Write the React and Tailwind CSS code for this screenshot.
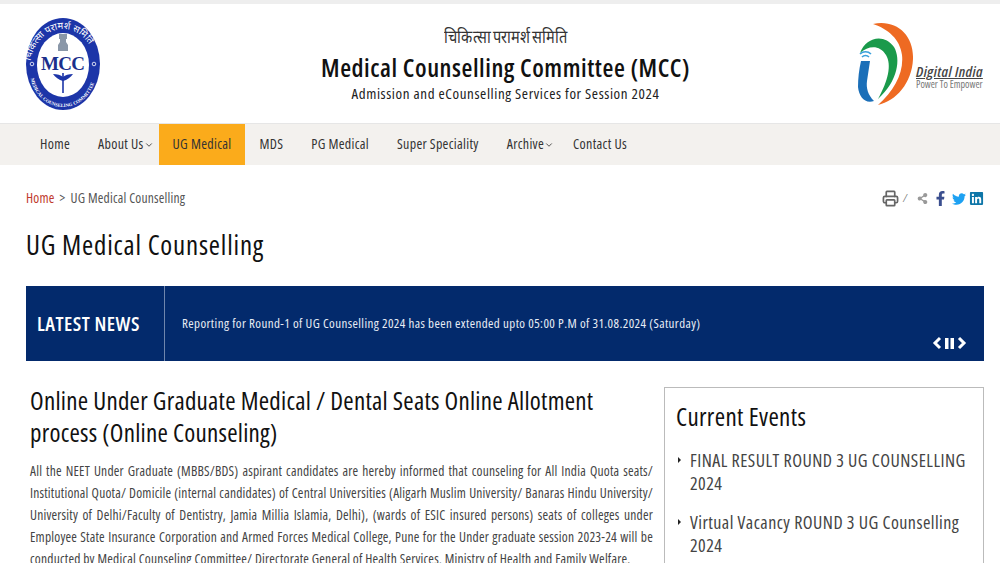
import React from 'react';
import { ChevronDown, Printer } from 'lucide-react';
import { FaFacebookF, FaTwitter, FaLinkedin, FaShareAlt } from 'react-icons/fa';

const Mcc = () => (
  <svg width="76" height="94" viewBox="0 0 76 94">
    <defs>
      <path id="topArc" d="M5 52 A33 40 0 0 1 71 52" />
      <path id="botArc" d="M5 54 A33 36 0 0 0 71 54" />
    </defs>
    <ellipse cx="38" cy="47" rx="37" ry="46" fill="#1c35a8" />
    <ellipse cx="38" cy="48" rx="26" ry="32" fill="#fff" />
    <circle cx="7" cy="47" r="1.800" fill="none" stroke="#fff" strokeWidth="0.800" />
    <circle cx="69" cy="47" r="1.800" fill="none" stroke="#fff" strokeWidth="0.800" />
    <text fontSize="9.500" fill="#fff" fontFamily="'Noto Sans',sans-serif">
      <textPath href="#topArc" startOffset="7%">चिकित्सा परामर्श समिति</textPath>
    </text>
    <text fontSize="4.800" fontWeight="700" fill="#fff" fontFamily="'Liberation Serif',serif">
      <textPath href="#botArc" startOffset="7%">MEDICAL COUNSELING COMMITTEE</textPath>
    </text>
    <path d="M34 17h8v5h-1v3l2 3v6h-10v-6l2-3v-3h-1z" fill="#8a97a8" />
    <text x="38" y="53" textAnchor="middle" fontSize="19" fontWeight="700" fill="#1c2f8c" fontFamily="'Liberation Serif',serif" textLength="44">MCC</text>
    <path d="M38 56v20" stroke="#1c35a8" strokeWidth="1.600" />
    <path d="M28 57c4 0 8 1 10 3 2-2 6-3 10-3-2 3-6 6-10 7-4-1-8-4-10-7z" fill="#1c35a8" />
  </svg>
);

const DigitalIndia = () => (
  <div className="flex items-end">
    <svg width="60" height="86" viewBox="0 0 60 86">
      <path d="M17 3C40 -2 58 14 57 38 56 62 40 80 22 84 38 70 48 52 46 34 44 18 32 8 17 3z" fill="#ee6a22" />
      <path d="M4 32C10 16 28 12 38 26 45 38 42 60 22 78 32 60 36 44 30 34 24 24 13 24 4 32z" fill="#1a9a4b" />
      <path d="M5 40h9l-3 20c-1 7 1 14 7 20-9 3-15-4-16-14 0-9 1-17 3-26z" fill="#1b6fb8" />
      <path d="M4 33a8 8 0 0 1 11 0M6 36a5 5 0 0 1 7 0" stroke="#3aa0dc" strokeWidth="1.600" fill="none" />
    </svg>
    <div className="mb-[17px] w-[68px]">
      <div className="whitespace-nowrap text-[15px] font-semibold italic leading-[15px] tracking-[0.4px] text-[#444] underline">Digital India</div>
      <div className="whitespace-nowrap text-[10px] leading-[11px] text-[#777]">Power To Empower</div>
    </div>
  </div>
);

const NavItem = ({ label, caret, active }) => (
  <div className={`flex h-full items-center pl-[14px] ${caret ? 'pr-[5px]' : 'pr-[14px]'} ${active ? 'bg-[#fbab1b]' : ''}`}>
    <span className="mb-[2px] whitespace-nowrap">{label}</span>
    {caret && <ChevronDown size={10} strokeWidth={2} />}
  </div>
);

const App = () => {
  return (
    <div className="h-[563px] w-[1000px] overflow-hidden bg-white font-['Open_Sans',sans-serif] text-[#222] [font-stretch:75%]">
      <div className="h-[4px] bg-[#eeeeee]" />
      <header className="flex h-[119px] items-center justify-between pl-[25px] pr-[16px]">
        <Mcc />
        <div className="ml-[54px] flex flex-col items-center">
          <div className="scale-x-[0.81] whitespace-nowrap text-[18px] leading-[24px] text-[#333]">चिकित्सा परामर्श समिति</div>
          <div className="mt-[3px] text-[25px] font-semibold leading-[32px] tracking-[0.55px] text-[#111]">Medical Counselling Committee (MCC)</div>
          <div className="text-[15px] leading-[20px] tracking-[0.6px] text-[#222]">Admission and eCounselling Services for Session 2024</div>
        </div>
        <DigitalIndia />
      </header>
      <nav className="flex h-[42px] items-center border-t border-[#e6e6e6] bg-[#f3f1ee] pl-[26px] text-[14px] font-medium tracking-[0.3px] text-[#333]">
        <NavItem label="Home" />
        <NavItem label="About Us" caret />
        <NavItem label="UG Medical" active />
        <NavItem label="MDS" />
        <NavItem label="PG Medical" />
        <NavItem label="Super Speciality" />
        <NavItem label="Archive" caret />
        <NavItem label="Contact Us" />
      </nav>

      <div className="pl-[26px] pr-[16px]">
        <div className="flex h-[66px] items-center justify-between">
          <div className="text-[13.500px] tracking-[0.2px] text-[#555]">
            <span className="text-[#c0392b]">Home</span>
            <span className="mx-[5px]">&gt;</span>UG Medical Counselling
          </div>
          <div className="flex items-center gap-[4px] pt-[1px]">
            <Printer size={17} strokeWidth={2.400} className="text-[#666]" />
            <span className="text-[11px] italic text-[#777]">/</span>
            <FaShareAlt size={11} className="ml-[6px] text-[#999]" />
            <FaFacebookF size={15} className="ml-[1px] text-[#3b4f8f]" />
            <FaTwitter size={14} className="text-[#1da1f2]" />
            <FaLinkedin size={15} className="ml-[-1px] text-[#0e76a8]" />
          </div>
        </div>
        <h1 className="h-[55px] text-[27px] font-medium leading-[28px] tracking-[0.8px] text-[#111]">UG Medical Counselling</h1>

        <div className="relative flex h-[75px] items-stretch bg-[#032a6c] text-white">
          <div className="flex w-[139px] items-center border-r border-[#6f86ad] pl-[11px] text-[20px] font-semibold tracking-[0.5px]">LATEST NEWS</div>
          <div className="flex flex-1 items-center pl-[17px] text-[13px] tracking-[0.4px] text-[#e8edf5]">
            Reporting for Round-1 of UG Counselling 2024 has been extended upto 05:00 P.M of 31.08.2024 (Saturday)
          </div>
          <div className="absolute bottom-[11px] right-[17px] flex items-center gap-[3px]">
            <svg width="10" height="14" viewBox="0 0 10 14"><path d="M8 2 3 7l5 5" stroke="#fff" strokeWidth="3" fill="none" /></svg>
            <svg width="9" height="11" viewBox="0 0 9 11"><path d="M0 0h3.500v11H0zM5.500 0H9v11H5.500z" fill="#fff" /></svg>
            <svg width="10" height="14" viewBox="0 0 10 14"><path d="m2 2 5 5-5 5" stroke="#fff" strokeWidth="3" fill="none" /></svg>
          </div>
        </div>

        <div className="mt-[23px] flex items-start">
          <div className="w-[627px] pl-[4px]">
            <h2 className="text-[25px] font-medium leading-[32px] tracking-[0.25px] text-[#111]">
              Online Under Graduate Medical / Dental Seats Online Allotment process (Online Counseling)
            </h2>
            <p className="mt-[12px] text-justify text-[13.500px] leading-[22px] tracking-[0.2px] text-[#444]">
              All the NEET Under Graduate (MBBS/BDS) aspirant candidates are hereby informed that counseling for All India Quota seats/ Institutional Quota/ Domicile (internal candidates) of Central Universities (Aligarh Muslim University/ Banaras Hindu University/ University of Delhi/Faculty of Dentistry, Jamia Millia Islamia, Delhi), (wards of ESIC insured persons) seats of colleges under Employee State Insurance Corporation and Armed Forces Medical College, Pune for the Under graduate session 2023-24 will be conducted by Medical Counseling Committee/ Directorate General of Health Services, Ministry of Health and Family Welfare.
            </p>
          </div>
          <aside className="ml-[11px] mt-[3px] h-[300px] w-[320px] border border-[#bbbbbb] px-[11px] pt-[12px]">
            <h3 className="text-[25px] font-medium leading-[32px] tracking-[0.35px] text-[#111]">Current Events</h3>
            <ul className="mt-[17px] text-[18px] leading-[23px] tracking-[0.45px] text-[#444]">
              <li className="relative pl-[14px]">
                <span className="absolute left-[2px] top-[8px] h-0 w-0 border-y-[3px] border-l-[3px] border-y-transparent border-l-[#222]" />
                FINAL RESULT ROUND 3 UG COUNSELLING 2024
              </li>
              <li className="relative mt-[16px] pl-[14px]">
                <span className="absolute left-[2px] top-[8px] h-0 w-0 border-y-[3px] border-l-[3px] border-y-transparent border-l-[#222]" />
                Virtual Vacancy ROUND 3 UG Counselling 2024
              </li>
            </ul>
          </aside>
        </div>
      </div>
    </div>
  );
};

export default App;
